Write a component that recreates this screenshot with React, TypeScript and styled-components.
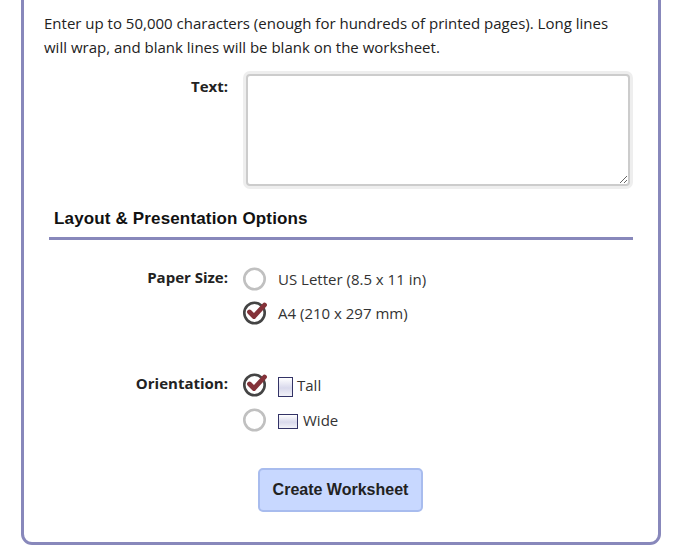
import React from "react";
import styled, { createGlobalStyle } from "styled-components";

const GlobalStyle = createGlobalStyle`
  html, body {
    margin: 0;
    padding: 0;
    background: #fff;
    overflow: hidden;
    height: 558px;
  }
  * {
    box-sizing: border-box;
  }
`;

const Page = styled.div`
  width: 682px;
  height: 558px;
  padding: 0 21px;
  overflow: hidden;
  font-family: "Open Sans", "Noto Sans", sans-serif;
  font-size: 15px;
  color: #222;
`;

// top of the card is scrolled out of view in the reference
const Card = styled.form`
  margin-top: -20px;
  width: 640px;
  height: 565px;
  padding: 28px 25px 0 20px;
  border: 3px solid #8888bb;
  border-radius: 11px;
  background: #fff;
`;

const Intro = styled.p`
  margin: 0 0 11px;
  line-height: 24px;
  width: 590px;
`;

const Row = styled.div<{ $gap?: number }>`
  display: grid;
  grid-template-columns: 184px 1fr;
  column-gap: 18px;
  margin-bottom: ${(p) => p.$gap ?? 0}px;
`;

const PaperRow = styled(Row)`
  margin-top: 22px;
`;

const Label = styled.label<{ $top: number }>`
  padding-top: ${(p) => p.$top}px;
  font-weight: 700;
  text-align: right;
  line-height: 20px;
  color: #222;
`;

const TextBox = styled.textarea`
  display: block;
  width: 384px;
  height: 112px;
  border: 2px solid #ccc;
  border-radius: 4px;
  box-shadow: 0 0 0 3px #eee;
  background: #fff;
  outline: none;
  margin: 4px 0 0 0;
`;

const SectionTitle = styled.h2`
  margin: 12px 0 0 5px;
  width: 584px;
  height: 42px;
  padding: 9px 0 0 5px;
  line-height: 23px;
  border-bottom: 3px solid #8888bb;
  font-family: "Liberation Sans", Arial, sans-serif;
  font-size: 17px;
  letter-spacing: 0.15px;
  font-weight: 700;
  color: #111;
`;

const Options = styled.div`
  display: flex;
  flex-direction: column;
  margin-left: -4px;
`;

const Option = styled.div<{ $height: number }>`
  display: flex;
  align-items: center;
  height: ${(p) => p.$height}px;
  line-height: 20px;
  color: #333;
`;

const OptionText = styled.span<{ $left: number }>`
  margin-left: ${(p) => p.$left}px;
`;

const Shape = styled.span<{ $wide?: boolean }>`
  display: block;
  margin: 4px 0 0 10px;
  width: ${(p) => (p.$wide ? 20 : 15)}px;
  height: ${(p) => (p.$wide ? 15 : 20)}px;
  border: 1px solid #333366;
  background: linear-gradient(#ffffff, #d9d9ec 55%, #f2f2f8);
`;

const Actions = styled.div`
  display: flex;
  justify-content: center;
  margin-top: 31px;
  padding-left: 3px;
`;

const Submit = styled.button`
  width: 165px;
  height: 44px;
  padding: 0 0 0 1px;
  border: 2px solid #a8bcee;
  border-radius: 5px;
  background: #c8d8ff;
  font-family: "Liberation Sans", Arial, sans-serif;
  font-size: 16px;
  font-weight: 700;
  color: #222;
`;

const RadioIcon = styled.svg`
  display: block;
  flex: none;
  width: 26px;
  height: 26px;
`;

const Radio: React.FC<{ checked?: boolean }> = ({ checked }) => (
  <RadioIcon viewBox="0 0 26 26" aria-hidden="true">
    <circle
      cx="12.5"
      cy="13"
      r="10.2"
      fill="none"
      stroke={checked ? "#444" : "#c0c0c0"}
      strokeWidth="2.6"
    />
    {checked && (
      <path
        d="M7.5 12 L12 16.5 L22.5 5"
        fill="none"
        stroke="#843239"
        strokeWidth="4.8"
        strokeLinecap="round"
        strokeLinejoin="round"
      />
    )}
  </RadioIcon>
);

const App: React.FC = () => {
  return (
    <Page>
      <GlobalStyle />
      <Card onSubmit={(e) => e.preventDefault()}>
        <Intro>
          Enter up to 50,000 characters (enough for hundreds of printed pages). Long lines
          will wrap, and blank lines will be blank on the worksheet.
        </Intro>
        <Row>
          <Label $top={6}>Text:</Label>
          <TextBox />
        </Row>

        <SectionTitle>Layout &amp; Presentation Options</SectionTitle>

        <PaperRow $gap={37}>
          <Label $top={5}>Paper Size:</Label>
          <Options>
            <Option $height={34}>
              <Radio />
              <OptionText $left={10}>US Letter (8.5 x 11 in)</OptionText>
            </Option>
            <Option $height={34}>
              <Radio checked />
              <OptionText $left={10}>A4 (210 x 297 mm)</OptionText>
            </Option>
          </Options>
        </PaperRow>

        <Row>
          <Label $top={6}>Orientation:</Label>
          <Options>
            <Option $height={35}>
              <Radio checked />
              <Shape />
              <OptionText $left={4}>Tall</OptionText>
            </Option>
            <Option $height={35}>
              <Radio />
              <Shape $wide />
              <OptionText $left={5}>Wide</OptionText>
            </Option>
          </Options>
        </Row>

        <Actions>
          <Submit type="submit">Create Worksheet</Submit>
        </Actions>
      </Card>
    </Page>
  );
};

export default App;
